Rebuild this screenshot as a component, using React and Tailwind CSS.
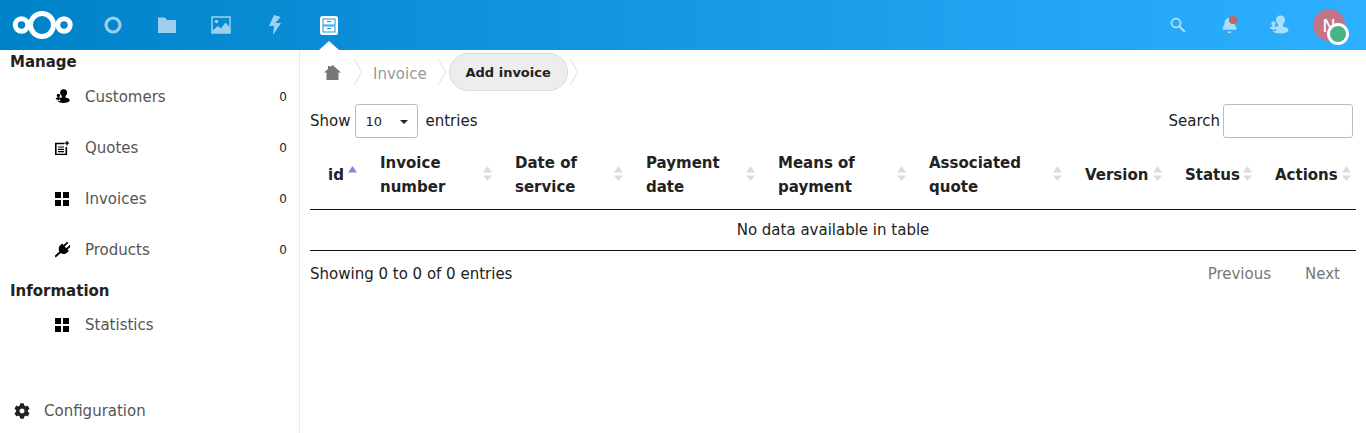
import { Bell } from "lucide-react";
import { FaCog } from "react-icons/fa";

function Logo() {
  return (
    <svg width="62" height="30" viewBox="0 0 62 30" fill="none" stroke="white" strokeWidth="5">
      <circle cx="9.5" cy="15" r="6.2" />
      <circle cx="30" cy="15" r="11.5" />
      <circle cx="52" cy="15" r="6.2" />
    </svg>
  );
}

function NavIcon({ children, active }) {
  return (
    <div className={"relative w-[54px] h-[50px] flex items-center justify-center " + (active ? "" : "opacity-60")}>
      {children}
      {active && (
        <div className="absolute bottom-0 left-[17px] w-0 h-0 border-x-[10px] border-x-transparent border-b-[9px] border-b-white" />
      )}
    </div>
  );
}

function ContactsIcon({ color = "white", size = 20 }) {
  return (
    <svg width={size} height={size} viewBox="0 0 20 20" fill={color}>
      <circle cx="11.5" cy="5" r="4.6" />
      <path d="M9.300 8h4.400l.6 3.800c3 .4 5.200 1.400 5.200 3.200 0 2.300-4 3.500-8 3.500-3.500 0-7-.8-8-2.500h3.500V11.500h1.800z" />
      <circle cx="4.500" cy="8.500" r="2.200" />
      <rect x="3.400" y="10" width="2.200" height="5" />
      <rect x="1" y="11.800" width="7" height="2.200" rx="1" />
    </svg>
  );
}

function Header() {
  return (
    <header className="h-[50px] shrink-0 flex items-center bg-[linear-gradient(90deg,#0082c9_0%,#2cb0ff_100%)]">
      <div className="w-[86px] pl-[12px] flex items-center">
        <Logo />
      </div>
      <NavIcon>
        <svg width="20" height="20" viewBox="0 0 20 20" fill="none" stroke="white" strokeWidth="3.2">
          <circle cx="10" cy="10" r="7" />
        </svg>
      </NavIcon>
      <NavIcon>
        <svg width="20" height="20" viewBox="0 0 20 20" fill="white">
          <path d="M1 2.500h7l2 2.500h9v13H1z" />
        </svg>
      </NavIcon>
      <NavIcon>
        <svg width="20" height="18" viewBox="0 0 20 18" fill="none" stroke="white" strokeWidth="1.500">
          <rect x="1" y="1" width="18" height="16" />
          <circle cx="5.500" cy="5.500" r="1.800" fill="white" stroke="none" />
          <path d="M1 15l6-5 3 2.500 4.500-6 4.500 5v5.500H1z" fill="white" stroke="none" />
        </svg>
      </NavIcon>
      <NavIcon>
        <svg width="14" height="20" viewBox="0 0 14 20" fill="white">
          <path d="M6 0L1 11h5l-1 9 8-12H7.500l5-6z" />
        </svg>
      </NavIcon>
      <NavIcon active>
        <svg width="18" height="19" viewBox="0 0 18 19">
          <rect width="18" height="19" rx="2.500" fill="white" />
          <rect x="3" y="3" width="12" height="6" fill="none" stroke="#1c9ae6" strokeWidth="1" />
          <rect x="3" y="10" width="12" height="6" fill="none" stroke="#1c9ae6" strokeWidth="1" />
          <rect x="7" y="5" width="4" height="1.200" fill="#1c9ae6" />
          <rect x="7" y="12" width="4" height="1.200" fill="#1c9ae6" />
        </svg>
      </NavIcon>
      <div className="ml-auto flex items-center">
        <div className="w-[52px] flex justify-center opacity-60">
          <svg width="16" height="16" viewBox="0 0 16 16" fill="none" stroke="white">
            <circle cx="6" cy="6" r="4.500" strokeWidth="1.800" />
            <path d="M9.500 9.500l5.500 5.500" strokeWidth="2.200" />
          </svg>
        </div>
        <div className="relative w-[50px] flex justify-center">
          <Bell size={17} color="white" fill="white" className="opacity-60" />
          <div className="absolute top-[-1px] right-[17px] w-[8px] h-[8px] rounded-full bg-[#c0675a]" />
        </div>
        <div className="w-[50px] flex justify-center opacity-60">
          <ContactsIcon />
        </div>
        <div className="relative w-[32px] h-[32px] ml-[9px] mr-[21px] rounded-full bg-[#c27488] flex items-center justify-center text-white text-[18px]">
          N
          <div className="absolute left-[14px] top-[14px] w-[22px] h-[22px] rounded-full bg-[#49b382] border-[3px] border-white" />
        </div>
      </div>
    </header>
  );
}

function GridIcon() {
  return (
    <svg width="14" height="14" viewBox="0 0 14 14" fill="black">
      <rect width="6" height="6" />
      <rect x="8" width="6" height="6" />
      <rect y="8" width="6" height="6" />
      <rect x="8" y="8" width="6" height="6" />
    </svg>
  );
}

function QuoteIcon() {
  return (
    <svg width="14" height="14" viewBox="0 0 14 14" fill="none" stroke="black">
      <path d="M9.500 2.500H.800v11h10.500V6" strokeWidth="1.600" />
      <path d="M3 6h6M3 8.300h6M3 10.600h6" strokeWidth="1.200" />
      <path d="M12 0v4.500M9.800 2.200h4.200" strokeWidth="1.300" />
    </svg>
  );
}

function PlugIcon() {
  return (
    <svg width="15" height="16" viewBox="0 0 15 16" fill="black">
      <g transform="rotate(48 7.500 8)">
        <rect x="4.500" y="-1" width="1.800" height="6" />
        <rect x="8.700" y="-1" width="1.800" height="6" />
        <path d="M2.500 4h10v2.500c0 2.500-2 4.500-4 4.800V18H6.500v-6.700c-2-.3-4-2.300-4-4.800z" />
      </g>
    </svg>
  );
}

function NavItem({ icon, label, count }) {
  return (
    <div className="h-[51px] flex items-center pl-[55px] pr-[12px]">
      <div className="w-[30px] flex items-center">{icon}</div>
      <span className="pt-[1px] text-[15px] text-[#555]">{label}</span>
      {count !== undefined && <span className="ml-auto text-[12px] text-[#222]">{count}</span>}
    </div>
  );
}

function Sidebar() {
  return (
    <aside className="w-[300px] shrink-0 border-r border-[#ebebeb] flex flex-col">
      <h3 className="pl-[10px] h-[21px] leading-[25px] text-[15px] font-bold text-[#222]">Manage</h3>
      <NavItem icon={<ContactsIcon color="black" size={15} />} label="Customers" count={0} />
      <NavItem icon={<QuoteIcon />} label="Quotes" count={0} />
      <NavItem icon={<GridIcon />} label="Invoices" count={0} />
      <NavItem icon={<PlugIcon />} label="Products" count={0} />
      <h3 className="pl-[10px] h-[24px] leading-[32px] text-[15px] font-bold text-[#222]">Information</h3>
      <NavItem icon={<GridIcon />} label="Statistics" />
      <div className="mt-auto h-[44px] flex items-center pl-[14px]">
        <FaCog size={16} color="#222" className="mr-[14px]" />
        <span className="pt-[1px] text-[15px] text-[#555]">Configuration</span>
      </div>
    </aside>
  );
}

function Crumb() {
  return (
    <svg width="10" height="26" viewBox="0 0 10 26" fill="none" stroke="#ddd" className="shrink-0">
      <path d="M1 0l8 13-8 13" />
    </svg>
  );
}

function Breadcrumb() {
  return (
    <div className="h-[44px] flex items-center">
      <div className="w-[43px] pl-[14px] shrink-0">
        <svg width="17" height="15" viewBox="0 0 17 15" fill="#777">
          <path d="M8.500 0L17 7.500h-2.500V15h-12V7.500H0L4 4V1h2v1.200z" />
        </svg>
      </div>
      <Crumb />
      <span className="ml-[10px] mr-[10px] pt-[5px] text-[15px] text-[#999]">Invoice</span>
      <Crumb />
      <div className="ml-[2px] h-[38px] w-[119px] rounded-[19px] bg-[#ededed] border border-[#dcdcdc] flex items-center justify-center pt-[1px] text-[13px] font-bold text-[#222]">
        Add invoice
      </div>
      <div className="ml-[1px]">
        <Crumb />
      </div>
    </div>
  );
}

function SortIcon({ active }) {
  return (
    <svg width="9" height="16" viewBox="0 0 9 16" className="absolute right-[5px] top-1/2 -translate-y-1/2">
      <path d="M4.500 0L9 6.500H0z" fill={active ? "#8888dd" : "#dcdcdc"} />
      {!active && <path d="M4.500 15L9 9.500H0z" fill="#dcdcdc" />}
    </svg>
  );
}

const columns = [
  { key: "id", lines: ["id"], width: "w-[52px]", active: true },
  { key: "number", lines: ["Invoice", "number"], width: "w-[135px]" },
  { key: "date", lines: ["Date of", "service"], width: "w-[131px]" },
  { key: "payment", lines: ["Payment", "date"], width: "w-[132px]" },
  { key: "means", lines: ["Means of", "payment"], width: "w-[151px]" },
  { key: "quote", lines: ["Associated", "quote"], width: "w-[156px]" },
  { key: "version", lines: ["Version"], width: "w-[100px]" },
  { key: "status", lines: ["Status"], width: "w-[90px]" },
  { key: "actions", lines: ["Actions"], width: "w-[99px]" },
];

function DataTable() {
  return (
    <table className="w-[1046px] table-fixed border-collapse">
      <thead>
        <tr className="border-b border-[#111]">
          {columns.map((c) => (
            <th key={c.key} className={"relative pl-[18px] pr-0 pt-[12px] pb-[10px] text-left text-[15px] leading-[24px] font-bold text-[#222] " + c.width}>
              {c.lines.map((l) => (
                <div key={l}>{l}</div>
              ))}
              <SortIcon active={c.active} />
            </th>
          ))}
        </tr>
      </thead>
      <tbody>
        <tr className="border-b border-[#111]">
          <td colSpan={9} className="h-[41px] pt-[1px] text-center text-[15px] text-[#222]">
            No data available in table
          </td>
        </tr>
      </tbody>
    </table>
  );
}

export default function App() {
  return (
    <div className="h-screen flex flex-col bg-white overflow-hidden font-['DejaVu_Sans',sans-serif]">
      <Header />
      <div className="flex-1 flex min-h-0">
        <Sidebar />
        <main className="flex-1 pl-[10px]">
          <Breadcrumb />
          <div className="w-[1043px] h-[45px] flex items-start justify-between pt-[10px] text-[15px] text-[#222]">
            <div className="flex items-center h-[34px]">
              <span className="pt-[1px]">Show</span>
              <div className="ml-[5px] mr-[7px] w-[63px] h-[34px] border border-[#bbb] rounded-[3px] flex items-center justify-between pl-[9px] pr-[9px] pt-[1px] text-[13px]">
                10
                <div className="w-0 h-0 border-x-[4px] border-x-transparent border-t-[4px] border-t-[#222]" />
              </div>
              <span className="pt-[1px]">entries</span>
            </div>
            <div className="flex items-center h-[34px]">
              <span className="pt-[1px]">Search</span>
              <div className="ml-[3px] w-[130px] h-[34px] border border-[#bbb] rounded-[3px]" />
            </div>
          </div>
          <DataTable />
          <div className="w-[1046px] flex items-center justify-between h-[46px] pt-[1px] text-[15px] text-[#222]">
            <span>Showing 0 to 0 of 0 entries</span>
            <div className="flex text-[#777]">
              <span className="mr-[34px]">Previous</span>
              <span className="mr-[16px]">Next</span>
            </div>
          </div>
        </main>
      </div>
    </div>
  );
}
